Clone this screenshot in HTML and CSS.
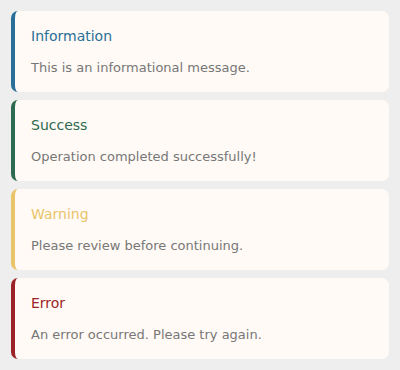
FILE: index.html
```html
<!DOCTYPE html>
<html lang="en">
<head>
  <meta charset="UTF-8" />
  <meta name="viewport" content="width=device-width, initial-scale=1.0"/>
  <title>Alerts</title>
  <link rel="stylesheet" href="styles.css">
</head>
<body>
  <div class="alerts">
    <div class="alert info">
      <div class="alert-title">Information</div>
      <p class="alert-text">This is an informational message.</p>
    </div>
    <div class="alert success">
      <div class="alert-title">Success</div>
      <p class="alert-text">Operation completed successfully!</p>
    </div>
    <div class="alert warning">
      <div class="alert-title">Warning</div>
      <p class="alert-text">Please review before continuing.</p>
    </div>
    <div class="alert error">
      <div class="alert-title">Error</div>
      <p class="alert-text">An error occurred. Please try again.</p>
    </div>
  </div>
</body>
</html>
```

FILE: styles.css
```css
* { margin: 0; padding: 0; box-sizing: border-box; }
body {
  font-family: "DejaVu Sans", sans-serif;
  background: #eeeeee;
  padding: 11px;
}
.alerts {
  display: flex;
  flex-direction: column;
  gap: 8.5px;
}
.alert {
  height: 80.5px;
  background: #fffaf5;
  border-radius: 7px;
  border-left: 4px solid #2a6f97;
  padding: 16px 16px 0 16px;
}
.alert-title {
  font-size: 14px;
  line-height: 18px;
  margin-bottom: 14.5px;
}
.alert-text {
  font-size: 13px;
  line-height: 16px;
  color: #777;
}
.info { border-left-color: #2a6f97; }
.info .alert-title { color: #2a6f97; }
.success { border-left-color: #2d6a4f; }
.success .alert-title { color: #2d6a4f; }
.warning { border-left-color: #e9c46a; }
.warning .alert-title { color: #e9c46a; }
.error { border-left-color: #9b2226; }
.error .alert-title { color: #9b2226; }
```
